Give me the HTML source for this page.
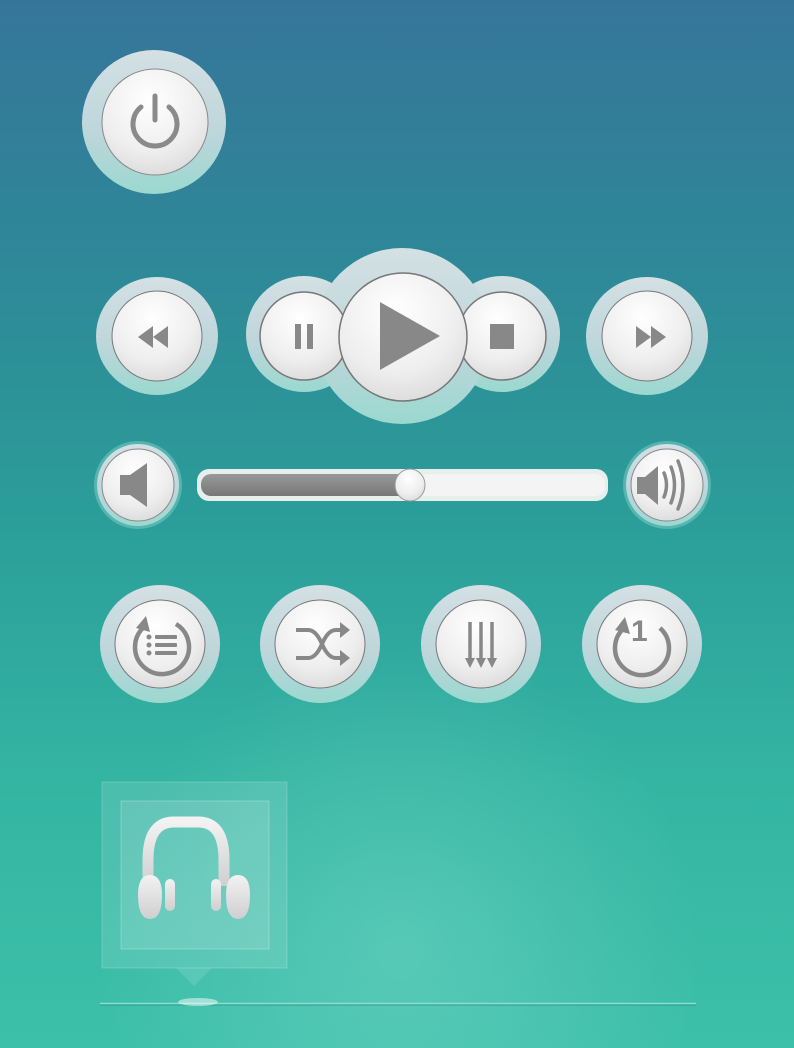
<!DOCTYPE html>
<html><head><meta charset="utf-8"><style>
html,body{margin:0;padding:0;width:794px;height:1048px;overflow:hidden}
body{background:linear-gradient(180deg,#36759a 0%,#2e8898 25%,#2b9e99 50%,#34b5a3 75%,#3dc0aa 100%)}
svg{position:absolute;left:0;top:0}
</style></head><body>
<svg width="794" height="1048" viewBox="0 0 794 1048">
<defs>
<radialGradient id="glow" cx="400" cy="950" r="300" gradientUnits="userSpaceOnUse">
<stop offset="0" stop-color="#8fe0d2" stop-opacity=".35"/><stop offset="1" stop-color="#8fe0d2" stop-opacity="0"/></radialGradient>
<linearGradient id="halo" x1="0" y1="0" x2="0" y2="1">
<stop offset="0" stop-color="#d4e0e4"/><stop offset=".6" stop-color="#bcd6da"/><stop offset="1" stop-color="#9ad8d0"/></linearGradient>
<radialGradient id="btn" cx=".45" cy=".3" r=".8">
<stop offset="0" stop-color="#ffffff"/><stop offset=".6" stop-color="#eeeeee"/><stop offset="1" stop-color="#d6d6d6"/></radialGradient>
<linearGradient id="bar" x1="0" y1="0" x2="0" y2="1"><stop offset="0" stop-color="#999"/><stop offset="1" stop-color="#777"/></linearGradient>
<linearGradient id="hp" x1="0" y1="0" x2="0" y2="1"><stop offset="0" stop-color="#f2f2f2"/><stop offset="1" stop-color="#cfcfcf"/></linearGradient>
</defs>
<rect width="794" height="1048" fill="url(#glow)"/>
<!-- power -->
<circle cx="154" cy="122" r="72" fill="url(#halo)"/>
<circle cx="155" cy="122" r="53" fill="url(#btn)" stroke="#888" stroke-width="1"/>
<path d="M141 107 A22 22 0 1 0 169 107" fill="none" stroke="#8a8a8a" stroke-width="5" stroke-linecap="round"/>
<line x1="155" y1="96" x2="155" y2="120" stroke="#8a8a8a" stroke-width="5" stroke-linecap="round"/>
<!-- rewind / ff -->
<ellipse cx="157" cy="336" rx="61" ry="59" fill="url(#halo)"/>
<ellipse cx="157" cy="336" rx="45" ry="45" fill="url(#btn)" stroke="#777" stroke-width="1"/>
<path d="M138 337 L153 326 L153 348Z M153 337 L168 326 L168 348Z" fill="#888"/>
<ellipse cx="647" cy="336" rx="61" ry="59" fill="url(#halo)"/>
<ellipse cx="647" cy="336" rx="45" ry="45" fill="url(#btn)" stroke="#777" stroke-width="1"/>
<path d="M666 337 L651 326 L651 348Z M651 337 L636 326 L636 348Z" fill="#888"/>
<!-- cloud -->
<g fill="url(#halo)">
<circle cx="304" cy="334" r="58"/><circle cx="502" cy="334" r="58"/><circle cx="402" cy="336" r="88"/></g>
<circle cx="304" cy="336" r="44" fill="url(#btn)" stroke="#777" stroke-width="1.5"/>
<circle cx="502" cy="336" r="44" fill="url(#btn)" stroke="#777" stroke-width="1.5"/>
<circle cx="403" cy="337" r="64" fill="url(#btn)" stroke="#777" stroke-width="1.5"/>
<rect x="295" y="324" width="6" height="25" fill="#888"/><rect x="307" y="324" width="6" height="25" fill="#888"/>
<path d="M380 302 L440 336 L380 370Z" fill="#888"/>
<rect x="490" y="324" width="24" height="25" fill="#888"/>
<!-- volume -->
<circle cx="138" cy="485" r="44" fill="#7fd0c8" opacity=".5"/>
<circle cx="138" cy="485" r="41" fill="url(#halo)"/>
<circle cx="138" cy="485" r="36" fill="url(#btn)" stroke="#888"/>
<path d="M120 475 L130 475 L147 463 L147 507 L130 495 L120 495Z" fill="#888"/>
<circle cx="667" cy="485" r="44" fill="#7fd0c8" opacity=".5"/>
<circle cx="667" cy="485" r="41" fill="url(#halo)"/>
<circle cx="667" cy="485" r="36" fill="url(#btn)" stroke="#888"/>
<path d="M637 477 L645 477 L658 466 L658 505 L645 494 L637 494Z" fill="#888"/>
<path d="M664 473 Q669 485 664 497 M671 467 Q678 485 671 503 M678 461 Q688 485 678 509" fill="none" stroke="#888" stroke-width="3.5" stroke-linecap="round"/>
<rect x="197" y="469" width="411" height="32" rx="12" fill="#e6eeee"/>
<rect x="201" y="474" width="404" height="22" rx="10" fill="#f4f4f4"/>
<rect x="201" y="474" width="210" height="22" rx="10" fill="url(#bar)"/>
<ellipse cx="410" cy="485" rx="15" ry="16" fill="url(#btn)" stroke="#999"/>
<!-- row 4 -->
<g>
<ellipse cx="160" cy="644" rx="60" ry="59" fill="url(#halo)"/>
<ellipse cx="160" cy="644" rx="45" ry="44" fill="url(#btn)" stroke="#777"/>
<ellipse cx="320" cy="644" rx="60" ry="59" fill="url(#halo)"/>
<ellipse cx="320" cy="644" rx="45" ry="44" fill="url(#btn)" stroke="#777"/>
<ellipse cx="481" cy="644" rx="60" ry="59" fill="url(#halo)"/>
<ellipse cx="481" cy="644" rx="45" ry="44" fill="url(#btn)" stroke="#777"/>
<ellipse cx="642" cy="644" rx="60" ry="59" fill="url(#halo)"/>
<ellipse cx="642" cy="644" rx="45" ry="44" fill="url(#btn)" stroke="#777"/>
</g>
<!-- repeat list -->
<path d="M144 627 A27 27 0 1 0 176 624" fill="none" stroke="#888" stroke-width="4.5"/>
<path d="M136 628 L146 616 L150 632Z" fill="#888"/>
<g fill="#888"><circle cx="149" cy="637" r="2.5"/><circle cx="149" cy="645" r="2.5"/><circle cx="149" cy="653" r="2.5"/>
<rect x="155" y="635" width="22" height="4" rx="1"/><rect x="155" y="643" width="22" height="4" rx="1"/><rect x="155" y="651" width="22" height="4" rx="1"/></g>
<!-- shuffle -->
<path d="M296 630 L308 630 Q316 630 322 644 Q328 658 336 658 L342 658 M296 658 L308 658 Q316 658 322 644 Q328 630 336 630 L342 630" fill="none" stroke="#888" stroke-width="4"/>
<path d="M340 622 L350 630 L340 638Z M340 650 L350 658 L340 666Z" fill="#888"/>
<!-- sequential -->
<g stroke="#888" stroke-width="3.5"><line x1="470" y1="622" x2="470" y2="660"/><line x1="481" y1="622" x2="481" y2="660"/><line x1="492" y1="622" x2="492" y2="660"/></g>
<path d="M465 658 L475 658 L470 668Z M476 658 L486 658 L481 668Z M487 658 L497 658 L492 668Z" fill="#888"/>
<!-- repeat one -->
<path d="M624 628 A27 27 0 1 0 660 628" fill="none" stroke="#888" stroke-width="4.5"/>
<path d="M615 630 L625 617 L630 634Z" fill="#888"/>
<text x="631" y="641" font-family="Liberation Sans, sans-serif" font-weight="bold" font-size="30" fill="#888">1</text>
<!-- headphones panel -->
<rect x="102" y="782" width="185" height="186" fill="#ffffff" fill-opacity=".12" stroke="#ffffff" stroke-opacity=".2"/>
<path d="M176 968 L212 968 L194 986Z" fill="#ffffff" fill-opacity=".12"/>
<rect x="121" y="801" width="148" height="148" fill="#ffffff" fill-opacity=".12" stroke="#ffffff" stroke-opacity=".25"/>
<path d="M148 886 L148 860 Q148 822 174 822 L198 822 Q224 822 224 860 L224 886" fill="none" stroke="url(#hp)" stroke-width="11"/>
<path d="M150 875 Q138 875 138 895 Q138 919 150 919 Q162 919 162 895 Q162 875 150 875Z" fill="url(#hp)"/>
<path d="M238 875 Q226 875 226 895 Q226 919 238 919 Q250 919 250 895 Q250 875 238 875Z" fill="url(#hp)"/>
<rect x="165" y="879" width="10" height="32" rx="5" fill="url(#hp)"/>
<rect x="211" y="879" width="10" height="32" rx="5" fill="url(#hp)"/>
<!-- line -->
<line x1="100" y1="1003.5" x2="696" y2="1003.5" stroke="#8fdcd0" stroke-width="1.5"/>
<line x1="100" y1="1005" x2="696" y2="1005" stroke="#1f8a80" stroke-width="1" opacity=".6"/>
<ellipse cx="198" cy="1002" rx="20" ry="4" fill="#ffffff" opacity=".5"/>
</svg>
</body></html>
